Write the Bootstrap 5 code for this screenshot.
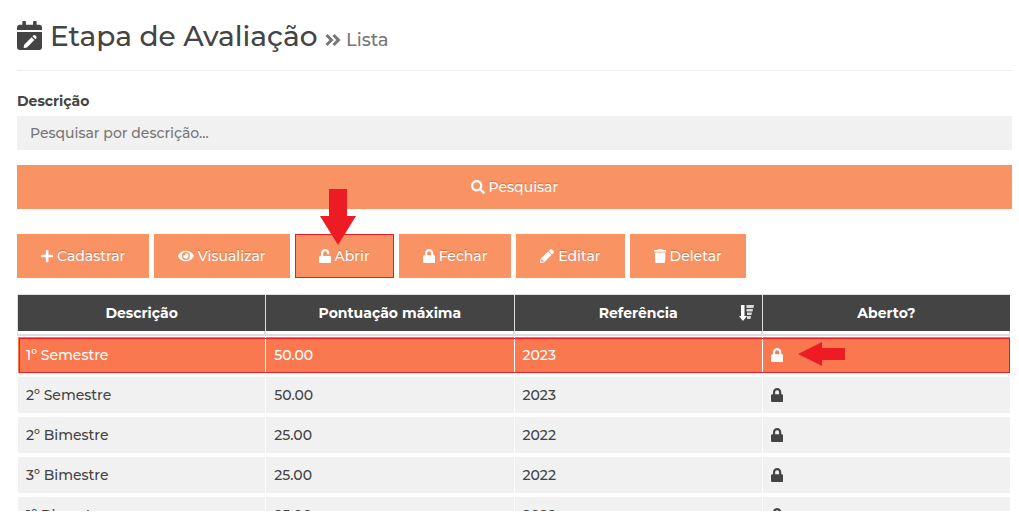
<!DOCTYPE html>
<html lang="pt-BR">
<head>
<meta charset="utf-8">
<meta name="viewport" content="width=device-width, initial-scale=1">
<title>Etapa de Avaliação</title>
<link href="https://cdn.jsdelivr.net/npm/bootstrap@5.3.0/dist/css/bootstrap.min.css" rel="stylesheet">
<style>
  body { font-family: Montserrat, Inter, "Open Sans", sans-serif; font-size: 14px; line-height: 20px; font-weight: 500; color: #444; background: #fff; }
  .stage { padding: 18px 7px 0 17px; height: calc(100vh - 8px); }
  .page-title { font-size: 28px; line-height: 36px; font-weight: 500; padding-bottom: 12px; border-bottom: 1px solid #eee; margin-bottom: 20px; }
  .page-title small { font-size: 18px; font-weight: 500; color: #777; }
  .title-icon { width: 25px; height: 29px; margin-right: 8px; vertical-align: -4px; }
  .field-label { font-weight: 700; margin-bottom: 5px; }
  .field { height: 34px; border: 0; border-radius: 0; background: #f1f1f1; padding: 6px 13px; font-size: 14px; font-weight: 500; }
  .field::placeholder { color: #777; opacity: 1; }
  .btn-flat { --bs-btn-color: #fff; --bs-btn-bg: #f99363; --bs-btn-border-color: #f99363; --bs-btn-hover-color: #fff; --bs-btn-hover-bg: #f97850; --bs-btn-hover-border-color: #f97850; --bs-btn-active-color: #fff; --bs-btn-active-bg: #f97850;
    --bs-btn-padding-x: 23px; --bs-btn-padding-y: 11px; --bs-btn-border-radius: 0; --bs-btn-font-size: 14px; --bs-btn-font-weight: 500; --bs-btn-line-height: 20px; text-shadow: 0 -1px 1px rgba(120,40,0,.3); white-space: nowrap; }
  .search-btn { margin-top: 15px; }
  .toolbar { gap: 5px; margin: 25px 0 16px; }
  .marked { border-color: #ed1c24; }
  .icon { height: 14px; width: auto; vertical-align: -2px; fill: currentColor; }
  .grid-wrap { padding-right: 2px; }
  .grid { table-layout: fixed; border-collapse: separate; border-spacing: 0; width: 100%; }
  .grid th, .grid td { border: 0 solid transparent; border-width: 0 0 4px 1px; background-clip: padding-box; padding: 8px; height: 40px; line-height: 20px; }
  .grid th { background-color: #444; color: #fff; text-align: center; font-weight: 700; border-top: 1px solid #ddd; box-shadow: 0 1px #ddd; height: 41px; position: relative; }
  .grid td { background-color: #f1f1f1; }
  .grid .chosen { position: relative; }
  .grid .chosen td { background-color: #f97850; color: #fff; border-top-width: 2px; height: 42px; }
  .row-outline { position: absolute; inset: 3px 0 4px 2px; border: 1px solid #ed1c24; pointer-events: none; z-index: 1; }
  .sort-icon { position: absolute; right: 8px; top: 10px; width: 15px; height: 16px; fill: #fff; }
  .pointer { position: absolute; fill: #ed1c24; pointer-events: none; }
  .pointer-down { left: 25px; top: -45px; width: 36px; height: 56px; z-index: 2; }
  .pointer-left { left: 35px; top: 5px; width: 47px; height: 24px; }
</style>
</head>
<body>
<svg class="d-none" aria-hidden="true">
  <symbol id="lock" viewBox="0 0 448 512"><path d="M400 224h-24v-72C376 68.2 307.8 0 224 0S72 68.2 72 152v72H48c-26.5 0-48 21.5-48 48v192c0 26.5 21.5 48 48 48h352c26.5 0 48-21.5 48-48V272c0-26.5-21.5-48-48-48zm-104 0H152v-72c0-39.7 32.3-72 72-72s72 32.3 72 72v72z"/></symbol>
</svg>
<main class="stage overflow-hidden">
  <h1 class="page-title mt-0"><svg class="title-icon" viewBox="0 0 448 512" preserveAspectRatio="none" aria-hidden="true"><path fill="#444" d="M48 64h48V16c0-9 7-16 16-16h32c9 0 16 7 16 16v48h128V16c0-9 7-16 16-16h32c9 0 16 7 16 16v48h48c26 0 48 22 48 48v48H0v-48c0-26 22-48 48-48zM0 192h448v272c0 26-22 48-48 48H48c-26 0-48-22-48-48z"/><path fill="#fff" d="M129 418l132-132 50 50-132 132-47 9c-9 1-14-5-13-12zM277 270l14-14c12-12 29-12 40 0l12 12c11 11 11 29 0 40l-14 14z"/></svg>Etapa de Avaliação <small><svg width="16" height="16" viewBox="0 0 16 16" fill="none" stroke="#777" stroke-width="3" aria-hidden="true"><path d="M1.5 2l5 5-5 5M8.500 2l5 5-5 5"/></svg> Lista</small></h1>

  <form>
    <label class="field-label d-block" for="descricao">Descrição</label>
    <input class="form-control field" id="descricao" type="text" placeholder="Pesquisar por descrição...">
    <button class="btn btn-flat search-btn w-100" type="button"><svg class="icon" viewBox="0 0 512 512"><path d="M505 442.700L405.300 343c-4.500-4.500-10.600-7-17-7H372c27.600-35.300 44-79.700 44-128C416 93.100 322.900 0 208 0S0 93.100 0 208s93.100 208 208 208c48.300 0 92.700-16.400 128-44v16.300c0 6.400 2.500 12.500 7 17l99.700 99.700c9.400 9.400 24.600 9.400 33.900 0l28.300-28.300c9.400-9.400 9.400-24.600.1-34zM208 336c-70.700 0-128-57.200-128-128 0-70.700 57.200-128 128-128 70.700 0 128 57.200 128 128 0 70.700-57.200 128-128 128z"/></svg> Pesquisar</button>
  </form>

  <div class="toolbar d-flex flex-wrap">
    <button class="btn btn-flat" type="button"><svg class="icon" viewBox="0 0 448 512"><path d="M416 208H272V64c0-17.670-14.330-32-32-32h-32c-17.670 0-32 14.330-32 32v144H32c-17.670 0-32 14.330-32 32v32c0 17.670 14.330 32 32 32h144v144c0 17.670 14.330 32 32 32h32c17.670 0 32-14.330 32-32V304h144c17.670 0 32-14.330 32-32v-32c0-17.670-14.330-32-32-32z"/></svg> Cadastrar</button>
    <button class="btn btn-flat" type="button"><svg class="icon" viewBox="0 0 576 512"><path d="M572.520 241.400C518.290 135.590 410.930 64 288 64S57.680 135.640 3.480 241.410a32.350 32.350 0 0 0 0 29.190C57.710 376.410 165.070 448 288 448s230.320-71.640 284.520-177.410a32.350 32.350 0 0 0 0-29.190zM288 400a144 144 0 1 1 144-144 143.930 143.930 0 0 1-144 144zm0-240a95.310 95.310 0 0 0-25.310 3.790 47.850 47.850 0 0 1-66.900 66.900A95.780 95.780 0 1 0 288 160z"/></svg> Visualizar</button>
    <div class="position-relative">
      <button class="btn btn-flat marked" type="button"><svg class="icon" viewBox="0 0 448 512"><path d="M400 256H152V152.900c0-39.600 31.700-72.500 71.300-72.900 40-.4 72.700 32.100 72.700 72v16c0 13.300 10.700 24 24 24h32c13.300 0 24-10.700 24-24v-16C376 68 307.500-.3 223.500 0 139.500.3 72 69.500 72 153.500V256H48c-26.500 0-48 21.500-48 48v160c0 26.500 21.500 48 48 48h352c26.500 0 48-21.500 48-48V304c0-26.500-21.500-48-48-48z"/></svg> Abrir</button>
      <svg class="pointer pointer-down" viewBox="0 0 36 56" aria-hidden="true"><path d="M9 0h18v27h9L18 56 0 27h9z"/></svg>
    </div>
    <button class="btn btn-flat" type="button"><svg class="icon" viewBox="0 0 448 512"><use href="#lock"/></svg> Fechar</button>
    <button class="btn btn-flat" type="button"><svg class="icon" viewBox="0 0 512 512"><path d="M497.900 142.100l-46.100 46.100c-4.700 4.700-12.300 4.700-17 0l-111-111c-4.700-4.700-4.700-12.300 0-17l46.100-46.100c18.700-18.700 49.100-18.700 67.900 0l60.100 60.100c18.800 18.700 18.800 49.100 0 67.900zM284.200 99.800L21.600 362.400.4 483.900c-2.900 16.400 11.400 30.600 27.800 27.800l121.500-21.300 262.600-262.600c4.700-4.700 4.700-12.300 0-17l-111-111c-4.800-4.700-12.400-4.700-17.100 0zM88 424h48v36.300l-64.500 11.300-31.100-31.100L51.700 376H88v48z"/></svg> Editar</button>
    <button class="btn btn-flat" type="button"><svg class="icon" viewBox="0 0 448 512"><path d="M432 32H312l-9.400-18.700A24 24 0 0 0 281.100 0H166.800a23.720 23.720 0 0 0-21.400 13.300L136 32H16A16 16 0 0 0 0 48v32a16 16 0 0 0 16 16h416a16 16 0 0 0 16-16V48a16 16 0 0 0-16-16zM32 128l10 339a48 48 0 0 0 48 45h268a48 48 0 0 0 48-45l10-339z"/></svg> Deletar</button>
  </div>

  <div class="grid-wrap">
    <table class="grid">
      <thead>
        <tr>
          <th scope="col">Descrição</th>
          <th scope="col">Pontuação máxima</th>
          <th scope="col">Referência<svg class="sort-icon" viewBox="0 0 15 16" aria-hidden="true"><path d="M2 0h3.500v11H8L4 16 0 11h2z"/><path opacity=".8" d="M7.500 0H15l-.5 3h-7zM7.500 4h6.500l-.5 2.500h-6zM8 7.500h5l-.5 2.500H8zM8 11h4l-.5 3H8z"/></svg></th>
          <th scope="col">Aberto?</th>
        </tr>
      </thead>
      <tbody>
        <tr class="chosen"><td>1º Semestre<span class="row-outline"></span></td><td>50.00</td><td>2023</td><td class="position-relative"><svg class="icon" viewBox="0 0 448 512" role="img" aria-label="Fechado"><use href="#lock"/></svg><svg class="pointer pointer-left" viewBox="0 0 47 24" aria-hidden="true"><path d="M0 12L24 0v6h23v12H24v6z"/></svg></td></tr>
        <tr><td>2º Semestre</td><td>50.00</td><td>2023</td><td><svg class="icon" viewBox="0 0 448 512" role="img" aria-label="Fechado"><use href="#lock"/></svg></td></tr>
        <tr><td>2º Bimestre</td><td>25.00</td><td>2022</td><td><svg class="icon" viewBox="0 0 448 512" role="img" aria-label="Fechado"><use href="#lock"/></svg></td></tr>
        <tr><td>3º Bimestre</td><td>25.00</td><td>2022</td><td><svg class="icon" viewBox="0 0 448 512" role="img" aria-label="Fechado"><use href="#lock"/></svg></td></tr>
        <tr><td>1º Bimestre</td><td>25.00</td><td>2022</td><td><svg class="icon" viewBox="0 0 448 512" role="img" aria-label="Fechado"><use href="#lock"/></svg></td></tr>
      </tbody>
    </table>
  </div>
</main>
<script src="https://cdn.jsdelivr.net/npm/bootstrap@5.3.0/dist/js/bootstrap.bundle.min.js"></script>
</body>
</html>
